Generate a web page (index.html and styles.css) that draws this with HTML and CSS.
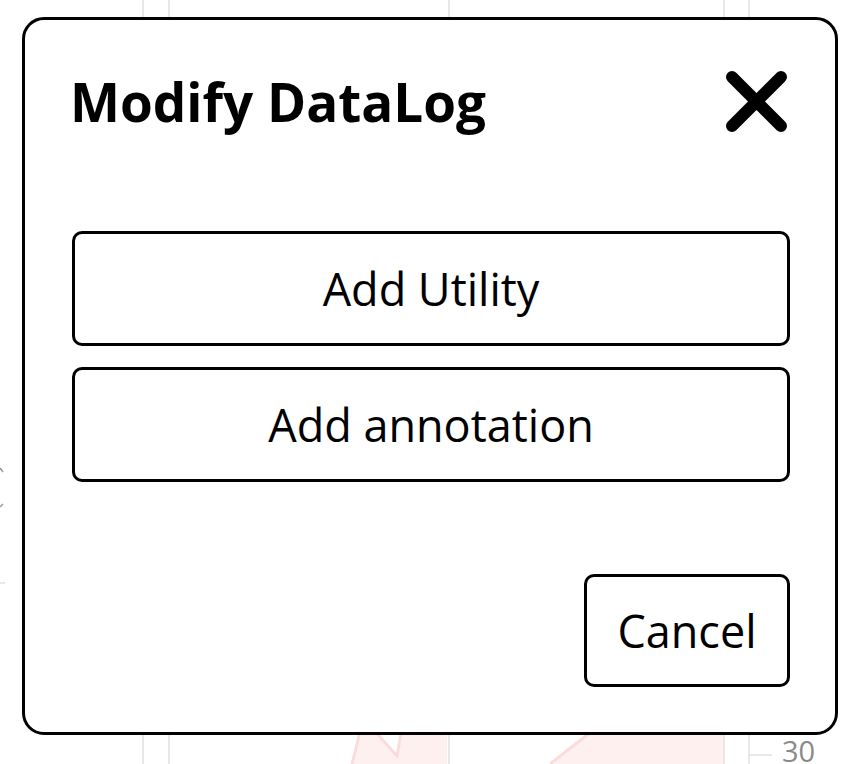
FILE: index.html
```html
<!DOCTYPE html>
<html lang="en">
<head>
<meta charset="utf-8">
<title>Modify DataLog</title>
<link rel="stylesheet" href="styles.css">
</head>
<body>
<div class="page">
  <svg class="chart" width="853" height="764" viewBox="0 0 853 764" aria-hidden="true">
    <g class="area">
      <polygon points="352,764 361,728 372,728 397,756 402,728 447,728 447,764"/>
      <polygon points="550,764 596,728 723,728 723,764"/>
    </g>
    <g class="area-edge">
      <polyline points="352,764 361,728"/>
      <polyline points="372,728 397,756 402,728"/>
      <polyline points="550,764 596,728"/>
    </g>
    <g class="grid">
      <line x1="143" y1="0" x2="143" y2="764"/>
      <line x1="169" y1="0" x2="169" y2="764"/>
      <line x1="449" y1="0" x2="449" y2="764"/>
      <line x1="724" y1="0" x2="724" y2="764"/>
      <line x1="749" y1="0" x2="749" y2="764"/>
      <line x1="749" y1="755" x2="772" y2="755"/>
      <line x1="0" y1="583" x2="5" y2="583"/>
    </g>
    <g class="marks">
      <path d="M0 468 L3 472"/>
      <path d="M0 507 L3 504"/>
    </g>
    <text class="tick" x="782" y="762">30</text>
  </svg>

  <div class="modal" role="dialog" aria-labelledby="dlg-title">
    <div class="modal-header">
      <h1 id="dlg-title" class="modal-title">Modify DataLog</h1>
      <button class="close-btn" aria-label="Close">
        <svg width="63" height="63" viewBox="0 0 63 63">
          <path d="M7 7 L56 56 M56 7 L7 56"/>
        </svg>
      </button>
    </div>
    <div class="action-list">
      <button class="action-btn">Add Utility</button>
      <button class="action-btn">Add annotation</button>
    </div>
    <div class="modal-footer">
      <button class="cancel-btn">Cancel</button>
    </div>
  </div>
</div>
</body>
</html>
```

FILE: styles.css
```css
* {
  box-sizing: border-box;
}

html, body {
  margin: 0;
  padding: 0;
  background: #ffffff;
}

body {
  font-family: "Open Sans", "Noto Sans", sans-serif;
  color: #000;
}

.page {
  position: relative;
  width: 853px;
  height: 764px;
  overflow: hidden;
}

.chart {
  display: block;
}

.chart .grid line {
  stroke: #e8e8e8;
  stroke-width: 2;
}

.chart .area polygon {
  fill: #fff0f0;
}

.chart .area-edge polyline {
  fill: none;
  stroke: #fbdcdc;
  stroke-width: 3;
}

.chart .marks path {
  stroke: #9a9a9a;
  stroke-width: 1.5;
  fill: none;
}

.chart .tick {
  font-family: "Open Sans", sans-serif;
  font-size: 29px;
  fill: #8a8a8a;
}

.modal {
  position: absolute;
  left: 22px;
  top: 17px;
  width: 816px;
  height: 718px;
  background: #fff;
  border: 3px solid #000;
  border-radius: 22px;
  padding: 50px 45px 45px 47px;
  display: flex;
  flex-direction: column;
}

.modal-header {
  display: flex;
  justify-content: space-between;
  align-items: center;
  height: 64px;
}

.modal-title {
  margin: 0 0 0 -2px;
  font-size: 53px;
  font-weight: 700;
  line-height: 64px;
  letter-spacing: 0;
}

.close-btn {
  border: 0;
  background: none;
  padding: 0;
  width: 63px;
  height: 63px;
  margin-top: -2px;
  margin-right: 2px;
  display: flex;
}

.close-btn path {
  stroke: #000;
  stroke-width: 12;
  stroke-linecap: round;
  fill: none;
}

.action-list {
  display: flex;
  flex-direction: column;
  gap: 21px;
  margin-top: 97px;
}

.action-btn,
.cancel-btn {
  font-family: "Open Sans", "Noto Sans", sans-serif;
  font-size: 45px;
  font-weight: 400;
  color: #000;
  background: #fff;
  border: 3px solid #000;
  border-radius: 10px;
  cursor: pointer;
}

.action-btn {
  height: 115px;
  width: 100%;
  padding: 0;
}

.modal-footer {
  margin-top: auto;
  display: flex;
  justify-content: flex-end;
}

.cancel-btn {
  width: 206px;
  height: 113px;
  padding: 0;
}
```
